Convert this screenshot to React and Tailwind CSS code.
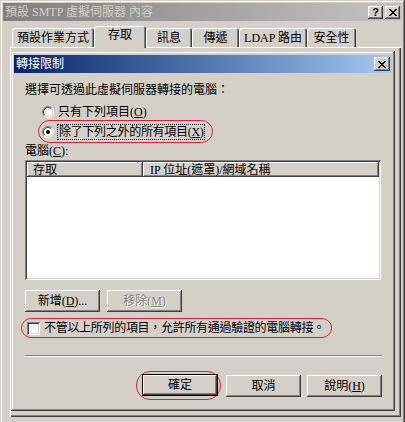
const raised =
  'shadow-[inset_-1px_-1px_#404040,inset_1px_1px_#ffffff,inset_-2px_-2px_#808080,inset_2px_2px_#d4d0c8]';
const sunken =
  'shadow-[inset_1px_1px_#808080,inset_-1px_-1px_#ffffff,inset_2px_2px_#404040,inset_-2px_-2px_#d4d0c8]';

function CloseGlyph() {
  return (
    <svg width="8" height="7" viewBox="0 0 8 7" shapeRendering="crispEdges">
      <path d="M0 0h2l2 2.4L6 0h2L5 3.5 8 7H6L4 4.6 2 7H0l3-3.5z" fill="#000" />
    </svg>
  );
}

function TitleButton({ children }) {
  return (
    <div className={`w-[15px] h-[13px] bg-[#d4d0c8] ${raised} flex items-center justify-center`}>
      {children}
    </div>
  );
}

function Radio({ checked }) {
  return (
    <svg width="12" height="12" viewBox="0 0 12 12" className="shrink-0">
      <circle cx="6" cy="6" r="5" fill="#fff" />
      <path d="M2.1 9.9A5.5 5.5 0 0 1 9.9 2.1" stroke="#808080" strokeWidth="1" fill="none" />
      <path d="M2.8 9.2A4.5 4.5 0 0 1 9.2 2.8" stroke="#404040" strokeWidth="1" fill="none" />
      <path d="M9.9 2.1A5.5 5.5 0 0 1 2.1 9.9" stroke="#ffffff" strokeWidth="1" fill="none" />
      <path d="M9.2 2.8A4.5 4.5 0 0 1 2.8 9.2" stroke="#d4d0c8" strokeWidth="1" fill="none" />
      {checked && <circle cx="6" cy="6" r="2" fill="#000" />}
    </svg>
  );
}

function Button({ w, children, disabled, def }) {
  return (
    <div
      className={`${w} h-[22px] bg-[#d4d0c8] flex items-center justify-center whitespace-nowrap ${
        def
          ? 'shadow-[inset_0_0_0_1px_#000,inset_-2px_-2px_#404040,inset_2px_2px_#ffffff,inset_-3px_-3px_#808080]'
          : raised
      } ${disabled ? 'text-[#808080] [text-shadow:1px_1px_0_#ffffff]' : 'text-black'}`}
    >
      {children}
    </div>
  );
}

function Tab({ w, selected, children }) {
  return (
    <div
      className={`${w} ${
        selected ? 'h-[22px] pb-[5px] z-10 -mb-[1px]' : 'h-[19px] pt-[1px]'
      } bg-[#d4d0c8] rounded-t-[3px] flex items-center justify-center whitespace-nowrap shadow-[inset_1px_1px_#ffffff,inset_-1px_0_#404040,inset_-2px_0_#808080]`}
    >
      {children}
    </div>
  );
}

export default function App() {
  return (
    <div className="w-[405px] h-[422px] overflow-hidden bg-[#d4d0c8] text-[12px] leading-[14px] text-black [font-family:'Liberation_Serif','Noto_Sans_CJK_TC',serif]">
      <div className="relative w-[405px] h-[440px] p-[3px] flex flex-col shadow-[inset_-1px_-1px_#404040,inset_1px_1px_#d4d0c8,inset_-2px_-2px_#808080,inset_2px_2px_#ffffff]">
        {/* outer window title */}
        <div className="h-[18px] bg-linear-to-r from-[#808080] to-[#c4c4c4] flex items-center justify-between pl-[2px] pr-[2px]">
          <span className="text-[#d4d0c8]">預設 SMTP 虛擬伺服器 內容</span>
          <div className="flex gap-[2px]">
            <TitleButton>
              <span className="font-bold text-[11px] leading-[11px] [font-family:'Liberation_Sans',sans-serif]">?</span>
            </TitleButton>
            <TitleButton>
              <CloseGlyph />
            </TitleButton>
          </div>
        </div>

        {/* tabs */}
        <div className="flex items-end ml-[9px] mt-[5px] h-[21px]">
          <Tab w="w-[82px]">預設作業方式</Tab>
          <Tab w="w-[52px]" selected>
            存取
          </Tab>
          <Tab w="w-[46px]">訊息</Tab>
          <Tab w="w-[47px]">傳遞</Tab>
          <Tab w="w-[68px]">LDAP 路由</Tab>
          <Tab w="w-[49px]">安全性</Tab>
        </div>
        <div className="ml-[7px] mr-[1px] h-[370px] shadow-[inset_1px_1px_#ffffff,inset_-1px_-1px_#404040,inset_-2px_-2px_#808080]" />

        {/* inner dialog */}
        <div className="absolute left-[11px] top-[51px] w-[384px] h-[360px] bg-[#d4d0c8] pt-[4px] px-[3px] flex flex-col shadow-[inset_-1px_-1px_#404040,inset_1px_1px_#d4d0c8,inset_-2px_-2px_#808080,inset_2px_2px_#ffffff]">
          <div className="h-[18px] bg-linear-to-r from-[#0a246a] to-[#a6caf0] flex items-center justify-between pl-[2px] pr-[2px]">
            <span className="text-white">轉接限制</span>
            <div className={`w-[16px] h-[14px] bg-[#d4d0c8] ${raised} flex items-center justify-center`}>
              <CloseGlyph />
            </div>
          </div>

          <div className="flex flex-col pl-[11px]">
            <div className="mt-[10px]">選擇可透過此虛擬伺服器轉接的電腦：</div>

            <div className="mt-[8px] ml-[17px] flex items-center gap-[4px] h-[14px]">
              <Radio />
              <span>
                只有下列項目(<span className="underline">O</span>)
              </span>
            </div>

            <div className="mt-[1px] ml-[13px] w-[175px] h-[23px] rounded-full border border-[#d8203c] flex items-center pl-[3px] gap-[3px]">
              <Radio checked />
              <span className="border border-dotted border-black px-[1px] h-[16px] flex items-center whitespace-nowrap tracking-[-0.3px]">
                除了下列之外的所有項目(<span className="underline">X</span>)
              </span>
            </div>

            <div className="mt-[1px]">
              電腦(<span className="underline">C</span>):
            </div>

            <div className={`mt-[2px] w-[356px] h-[120px] bg-white p-[2px] ${sunken}`}>
              <div className="flex h-[15px]">
                <div className={`w-[116px] bg-[#d4d0c8] ${raised} pl-[6px] flex items-center`}>存取</div>
                <div className={`flex-1 bg-[#d4d0c8] ${raised} pl-[7px] flex items-center`}>
                  IP 位址(遮罩)/網域名稱
                </div>
              </div>
            </div>

            <div className="mt-[10px] flex gap-[7px]">
              <Button w="w-[75px]">
                新增(<span className="underline">D</span>)...
              </Button>
              <Button w="w-[75px]" disabled>
                移除(<span className="underline">M</span>)
              </Button>
            </div>

            <div className="mt-[6px] -ml-[4px] w-[311px] h-[20px] rounded-full border border-[#d8203c] flex items-center pl-[5px] gap-[4px]">
              <div className={`w-[13px] h-[13px] shrink-0 bg-white ${sunken}`} />
              <span className="whitespace-nowrap tracking-[-0.3px]">
                不管以上所列的項目，允許所有通過驗證的電腦轉接。
              </span>
            </div>

            <div className="mt-[17px] w-[357px] h-[2px] border-t border-[#808080] border-b border-b-white" />

            <div className="mt-[14px] flex items-center pr-[10px] justify-end">
              <div className="rounded-[14px] border border-[#d8203c] pl-[5px] pr-[2px] pt-[2px] pb-[3px]">
                <Button w="w-[76px]" def>
                  確定
                </Button>
              </div>
              <div className="ml-[5px]">
                <Button w="w-[75px]">取消</Button>
              </div>
              <div className="ml-[6px]">
                <Button w="w-[75px]">
                  說明(<span className="underline">H</span>)
                </Button>
              </div>
            </div>
          </div>
        </div>
      </div>
    </div>
  );
}
